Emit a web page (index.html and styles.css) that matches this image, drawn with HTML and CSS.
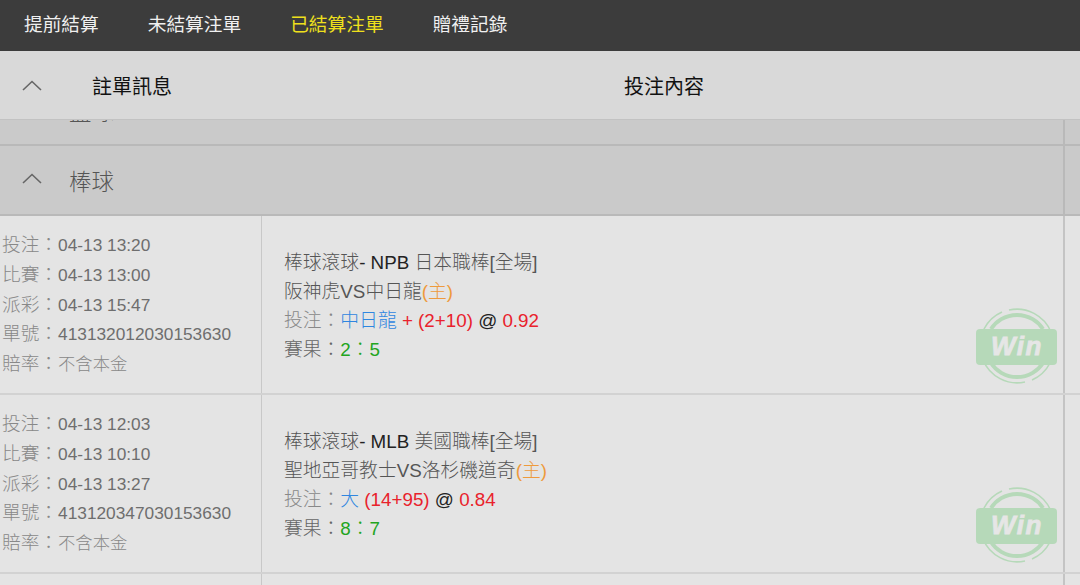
FILE: index.html
```html
<!DOCTYPE html>
<html lang="zh-Hant">
<head>
<meta charset="utf-8">
<title>已結算注單</title>
<link rel="stylesheet" href="styles.css">
</head>
<body>
<nav class="topbar">
  <a class="tab">提前結算</a>
  <a class="tab">未結算注單</a>
  <a class="tab active">已結算注單</a>
  <a class="tab">贈禮記錄</a>
</nav>
<header class="thead">
  <svg class="chev" viewBox="0 0 20 11"><path d="M1 10 L10 1.5 L19 10"/></svg>
  <div class="thead-info">註單訊息</div>
  <div class="thead-content">投注內容</div>
</header>
<main class="list">
  <div class="group">
    <svg class="chev" viewBox="0 0 20 11"><path d="M1 10 L10 1.5 L19 10"/></svg>
    <span class="group-name">籃球</span>
    <i class="rail"></i>
  </div>
  <div class="group">
    <svg class="chev" viewBox="0 0 20 11"><path d="M1 10 L10 1.5 L19 10"/></svg>
    <span class="group-name">棒球</span>
    <i class="rail"></i>
  </div>
  <article class="row">
    <div class="info">
      <div class="il"><span class="k">投注：</span>04-13 13:20</div>
      <div class="il"><span class="k">比賽：</span>04-13 13:00</div>
      <div class="il"><span class="k">派彩：</span>04-13 15:47</div>
      <div class="il"><span class="k">單號：</span>413132012030153630</div>
      <div class="il"><span class="k">賠率：</span><span class="note">不含本金</span></div>
    </div>
    <div class="detail">
      <div class="dl">棒球滾球<span class="dark">- NPB </span>日本職棒[全場]</div>
      <div class="dl">阪神虎VS中日龍<span class="orange">(主)</span></div>
      <div class="dl"><span class="k">投注：</span><span class="blue">中日龍</span> <span class="red">+ (2+10)</span> <span class="black">@</span> <span class="red">0.92</span></div>
      <div class="dl"><span class="k2">賽果：</span><span class="green">2：5</span></div>
      <svg class="win" viewBox="0 0 82 76">
        <path class="ring" d="M15 21 A31 31 0 0 1 67 21 M15 55 A31 31 0 0 0 67 55"/>
        <path class="ring thin" d="M8 21 A37 37 0 0 1 26 4 M33 2 A37 37 0 0 1 75 24 M7 52 A37 37 0 0 0 49 74 M56 72 A37 37 0 0 0 74 55"/>
        <rect class="plate" x="0" y="21" width="81" height="36" rx="4"/>
        <text class="wintext" x="41" y="47" text-anchor="middle">Win</text>
      </svg>
    </div>
    <i class="rail"></i>
  </article>
  <article class="row">
    <div class="info">
      <div class="il"><span class="k">投注：</span>04-13 12:03</div>
      <div class="il"><span class="k">比賽：</span>04-13 10:10</div>
      <div class="il"><span class="k">派彩：</span>04-13 13:27</div>
      <div class="il"><span class="k">單號：</span>413120347030153630</div>
      <div class="il"><span class="k">賠率：</span><span class="note">不含本金</span></div>
    </div>
    <div class="detail">
      <div class="dl">棒球滾球<span class="dark">- MLB </span>美國職棒[全場]</div>
      <div class="dl">聖地亞哥教士VS洛杉磯道奇<span class="orange">(主)</span></div>
      <div class="dl"><span class="k">投注：</span><span class="blue">大</span> <span class="red">(14+95)</span> <span class="black">@</span> <span class="red">0.84</span></div>
      <div class="dl"><span class="k2">賽果：</span><span class="green">8：7</span></div>
      <svg class="win" viewBox="0 0 82 76">
        <path class="ring" d="M15 21 A31 31 0 0 1 67 21 M15 55 A31 31 0 0 0 67 55"/>
        <path class="ring thin" d="M8 21 A37 37 0 0 1 26 4 M33 2 A37 37 0 0 1 75 24 M7 52 A37 37 0 0 0 49 74 M56 72 A37 37 0 0 0 74 55"/>
        <rect class="plate" x="0" y="21" width="81" height="36" rx="4"/>
        <text class="wintext" x="41" y="47" text-anchor="middle">Win</text>
      </svg>
    </div>
    <i class="rail"></i>
  </article>
  <article class="row"><div class="info"></div><div class="detail"></div><i class="rail"></i></article>
</main>
</body>
</html>
```
FILE: styles.css
```css
* { box-sizing: border-box; }
html, body { margin: 0; height: 100%; overflow: hidden; }
body {
  background: #e4e4e4;
  font-family: "Liberation Sans", "Noto Sans CJK TC", sans-serif;
  color: #555;
}
.topbar {
  height: 51px;
  background: #3c3c3c;
  display: flex;
  align-items: center;
  padding: 0 0 7px 24px;
  gap: 49px;
  font-size: 18.7px;
  color: #f0f0f0;
}
.tab.active { color: #efe01c; }
.thead {
  position: relative;
  z-index: 2;
  height: 69px;
  background: #d9d9d9;
  border-bottom: 1px solid #c2c2c2;
  display: flex;
  align-items: center;
  padding-left: 22px;
  color: #111;
  font-size: 20px;
}
.chev { width: 20px; height: 11px; fill: none; stroke: #666; stroke-width: 1.6; flex: none; }
.thead-info { margin-left: 50px; width: 532px; }
.list { margin-top: -44px; }
.group {
  position: relative;
  height: 70px;
  background: #cacaca;
  border-bottom: 2px solid #b9b9b9;
  display: flex;
  align-items: center;
  padding-left: 22px;
  font-size: 22.4px;
  color: #555;
  font-weight: 300;
}
.group .chev { margin-top: -3px; }
.group-name { margin-left: 27px; }
.rail {
  position: absolute;
  top: 0; bottom: 0;
  left: 1063px;
  width: 2px;
  background: #c4c4c4;
}
.group .rail { background: #b9b9b9; }
.row {
  position: relative;
  height: 179px;
  display: flex;
  border-bottom: 2px solid #d2d2d2;
  background: #e4e4e4;
}
.info {
  width: 262px;
  border-right: 1px solid #c8c8c8;
  padding: 14px 0 0 2px;
}
.il {
  height: 29.8px;
  line-height: 29.8px;
  font-size: 17.3px;
  color: #6e6e6e;
  white-space: nowrap;
}
.k { color: #888; font-weight: 300; }
.il .k { font-size: 18.7px; }
.note { color: #888; font-weight: 300; }
.detail {
  position: relative;
  flex: 1;
  padding: 32px 0 0 22px;
}
.dl {
  height: 29px;
  line-height: 29px;
  font-size: 18.8px;
  color: #555;
  font-weight: 300;
  white-space: nowrap;
}
.dark { color: #222; font-weight: 400; }
.k2 { color: #666; }
.orange { color: #ee9a3c; }
.blue { color: #2f86e0; }
.red { color: #e9222c; font-weight: 400; }
.black { color: #222; font-weight: 400; }
.green { color: #23a51e; }
.win {
  position: absolute;
  left: 714px;
  top: 92px;
  width: 82px;
  height: 76px;
}
.ring { fill: none; stroke: #b6d9b9; stroke-width: 4; }
.ring.thin { stroke-width: 1.6; }
.plate { fill: #b6d9b9; }
.wintext {
  font-family: "Liberation Sans", sans-serif;
  font-size: 26px;
  font-weight: 700;
  font-style: italic;
  letter-spacing: 1.5px;
  fill: #e6e6e6;
  stroke: #e6e6e6;
  stroke-width: 0.8;
}
```
